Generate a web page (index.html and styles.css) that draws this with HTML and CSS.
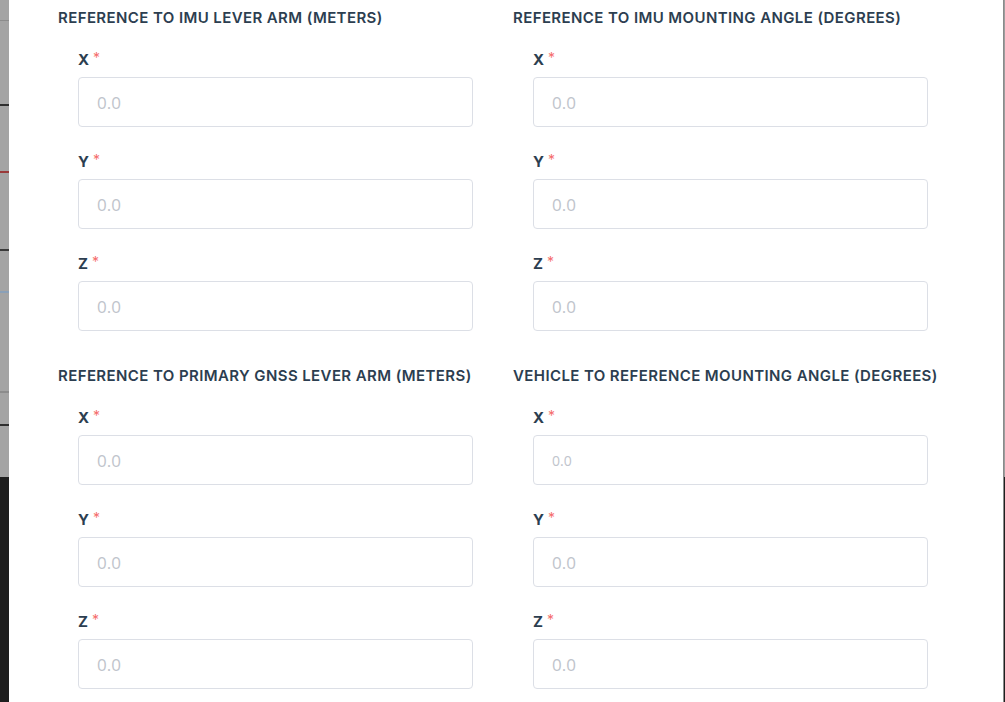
FILE: index.html
```html
<!DOCTYPE html>
<html lang="en">

<head>
    <meta charset="UTF-8" />
    <meta name="viewport" content="width=device-width, initial-scale=1.0" />
    <title>Mounting</title>
    <link rel="stylesheet" href="styles.css">
</head>

<body>
    <div class="pagina">
        <div class="fondo-izq"></div>
        <div class="panel">
            <div class="secciones">
                <div class="seccion">
                    <h3>Reference to IMU lever arm (meters)</h3>
                    <div class="campo">
                        <label>X<span class="req">*</span></label>
                        <input type="text" placeholder="0.0" />
                    </div>
                    <div class="campo">
                        <label>Y<span class="req">*</span></label>
                        <input type="text" placeholder="0.0" />
                    </div>
                    <div class="campo">
                        <label>Z<span class="req">*</span></label>
                        <input type="text" placeholder="0.0" />
                    </div>
                </div>
                <div class="seccion">
                    <h3>Reference to IMU mounting angle (degrees)</h3>
                    <div class="campo">
                        <label>X<span class="req">*</span></label>
                        <input type="text" placeholder="0.0" />
                    </div>
                    <div class="campo">
                        <label>Y<span class="req">*</span></label>
                        <input type="text" placeholder="0.0" />
                    </div>
                    <div class="campo">
                        <label>Z<span class="req">*</span></label>
                        <input type="text" placeholder="0.0" />
                    </div>
                </div>
                <div class="seccion">
                    <h3>Reference to primary GNSS lever arm (meters)</h3>
                    <div class="campo">
                        <label>X<span class="req">*</span></label>
                        <input type="text" placeholder="0.0" />
                    </div>
                    <div class="campo">
                        <label>Y<span class="req">*</span></label>
                        <input type="text" placeholder="0.0" />
                    </div>
                    <div class="campo">
                        <label>Z<span class="req">*</span></label>
                        <input type="text" placeholder="0.0" />
                    </div>
                </div>
                <div class="seccion">
                    <h3>Vehicle to reference mounting angle (degrees)</h3>
                    <div class="campo">
                        <label>X<span class="req">*</span></label>
                        <input type="text" class="pequeno" placeholder="0.0" />
                    </div>
                    <div class="campo">
                        <label>Y<span class="req">*</span></label>
                        <input type="text" placeholder="0.0" />
                    </div>
                    <div class="campo">
                        <label>Z<span class="req">*</span></label>
                        <input type="text" placeholder="0.0" />
                    </div>
                </div>
            </div>
        </div>
        <div class="fondo-der"></div>
    </div>
</body>

</html>
```

FILE: styles.css
```css
* {
    box-sizing: border-box;
    margin: 0;
    padding: 0;
}

body {
    font-family: Inter, "Open Sans", sans-serif;
    color: #2c3e50;
    background-color: #1e1e1e;
    overflow: hidden;
}

.pagina {
    display: flex;
    height: 702px;
}

.fondo-izq {
    width: 9px;
    background:
        linear-gradient(to bottom,
            #a4a4a4 0, #a4a4a4 20px, #8c8c8c 20px, #8c8c8c 21px,
            #a4a4a4 21px, #a4a4a4 104px, #2e2e2e 104px, #2e2e2e 106px,
            #a4a4a4 106px, #a4a4a4 171px, #9a3a3a 171px, #9a3a3a 173px,
            #a4a4a4 173px, #a4a4a4 249px, #3a3a3a 249px, #3a3a3a 251px,
            #a4a4a4 251px, #a4a4a4 291px, #8aa0b8 291px, #8aa0b8 293px,
            #a4a4a4 293px, #a4a4a4 391px, #8c8c8c 391px, #8c8c8c 393px,
            #a4a4a4 393px, #a4a4a4 424px, #2e2e2e 424px, #2e2e2e 426px,
            #a4a4a4 426px, #a4a4a4 477px, #1e1e1e 477px);
}

.fondo-der {
    width: 2px;
    background: linear-gradient(to bottom, #9e9e9e 0, #9e9e9e 477px, #1e1e1e 477px);
    border-left: 1px solid #8a8a8a;
}

.panel {
    flex-grow: 1;
    background-color: white;
    padding-top: 8px;
    padding-left: 49px;
}

.secciones {
    display: grid;
    grid-template-columns: 455px 455px;
    row-gap: 35px;
}

h3 {
    font-size: 15px;
    line-height: 20px;
    font-weight: 600;
    letter-spacing: 0.4px;
    text-transform: uppercase;
    margin-bottom: 22px;
    white-space: nowrap;
}

.campo {
    padding-left: 20px;
    margin-bottom: 25px;
}

.campo:last-child {
    margin-bottom: 0;
}

label {
    display: block;
    height: 20px;
    font-size: 15px;
    line-height: 20px;
    font-weight: 700;
    margin-bottom: 7px;
}

.req {
    color: #f56c6c;
    font-size: 14px;
    line-height: 10px;
    font-weight: 400;
    margin-left: 4px;
    vertical-align: 2px;
}

input {
    display: block;
    width: 395px;
    height: 50px;
    border: 1px solid #dcdfe6;
    border-radius: 4px;
    padding-left: 18px;
    font-family: "Open Sans", sans-serif;
    font-size: 17px;
    color: #606266;
    outline: none;
}

input::placeholder {
    color: #c0c4cc;
}

input.pequeno {
    font-size: 14px;
}
```
